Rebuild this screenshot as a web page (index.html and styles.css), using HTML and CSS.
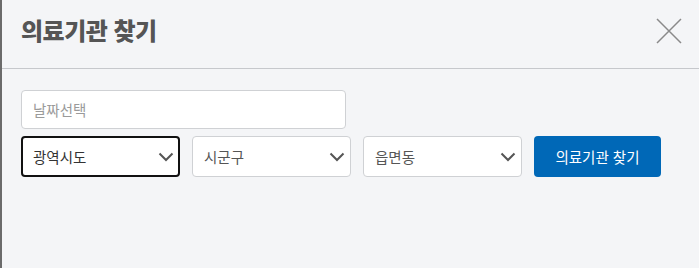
FILE: index.html
```html
<!DOCTYPE html>
<html lang="ko">
  <head>
    <meta charset="UTF-8" />
    <meta name="viewport" content="width=device-width, initial-scale=1.0" />
    <title>의료기관 찾기</title>
    <link rel="stylesheet" href="styles.css">
  </head>
  <body>
    <div class="modal">
      <div class="modal-header">
        <h2 class="modal-title">의료기관 찾기</h2>
        <button type="button" class="btn-close" aria-label="닫기">
          <svg width="26" height="26" viewBox="0 0 26 26">
            <path d="M1 1 L25 25 M25 1 L1 25" stroke="#8a8a8a" stroke-width="1.5" fill="none" />
          </svg>
        </button>
      </div>

      <div class="modal-body">
        <input type="text" class="date-input" placeholder="날짜선택" />

        <div class="search-row">
          <div class="select-box active">
            <span>광역시도</span>
            <svg class="chevron" width="16" height="10" viewBox="0 0 16 10">
              <path d="M1.5 1.5 L8 8 L14.5 1.5" stroke="#555" stroke-width="2" fill="none" />
            </svg>
          </div>
          <div class="select-box">
            <span>시군구</span>
            <svg class="chevron" width="16" height="10" viewBox="0 0 16 10">
              <path d="M1.5 1.5 L8 8 L14.5 1.5" stroke="#555" stroke-width="2" fill="none" />
            </svg>
          </div>
          <div class="select-box">
            <span>읍면동</span>
            <svg class="chevron" width="16" height="10" viewBox="0 0 16 10">
              <path d="M1.5 1.5 L8 8 L14.5 1.5" stroke="#555" stroke-width="2" fill="none" />
            </svg>
          </div>
          <button type="button" class="btn-search">의료기관 찾기</button>
        </div>
      </div>
    </div>
  </body>
</html>
```

FILE: styles.css
```css
body {
  margin: 0;
  font-family: "Noto Sans CJK KR", "Noto Sans", sans-serif;
  background-color: #f4f5f7;
}
.modal {
  height: 268px;
  border-left: 2px solid #6b6b6b;
  background-color: #f4f5f7;
  box-sizing: border-box;
}
.modal-header {
  display: flex;
  justify-content: space-between;
  align-items: center;
  height: 69px;
  box-sizing: border-box;
  padding: 0 17px 10px 19px;
  border-bottom: 1px solid #c6c8cc;
}
.modal-title {
  margin: 0;
  font-size: 24px;
  font-weight: 800;
  color: #555;
  letter-spacing: -0.5px;
}
.btn-close {
  background: none;
  border: none;
  padding: 0;
  display: flex;
  margin-top: 4px;
}
.modal-body {
  padding: 21px 19px;
}
.date-input {
  display: block;
  width: 325px;
  height: 39px;
  box-sizing: border-box;
  padding: 0 11px;
  border: 1px solid #cfd1d4;
  border-radius: 4px;
  background-color: white;
  font-family: inherit;
  font-size: 14.5px;
  color: #333;
}
.date-input::placeholder {
  color: #9a9a9a;
}
.search-row {
  display: flex;
  gap: 12px;
  margin-top: 7px;
}
.select-box {
  display: flex;
  justify-content: space-between;
  align-items: center;
  width: 159px;
  height: 41px;
  box-sizing: border-box;
  padding: 0 5px 0 11px;
  border: 1px solid #cfd1d4;
  border-radius: 4px;
  background-color: white;
  font-size: 14.5px;
  color: #555;
}
.select-box.active {
  border: 2px solid #111;
  padding-left: 10px;
  padding-right: 4px;
  color: #333;
}
.chevron {
  width: 16px;
  height: 10px;
}
.btn-search {
  width: 127px;
  height: 41px;
  border: none;
  border-radius: 4px;
  background-color: #0068b7;
  color: white;
  font-family: inherit;
  font-size: 14.5px;
}
```
